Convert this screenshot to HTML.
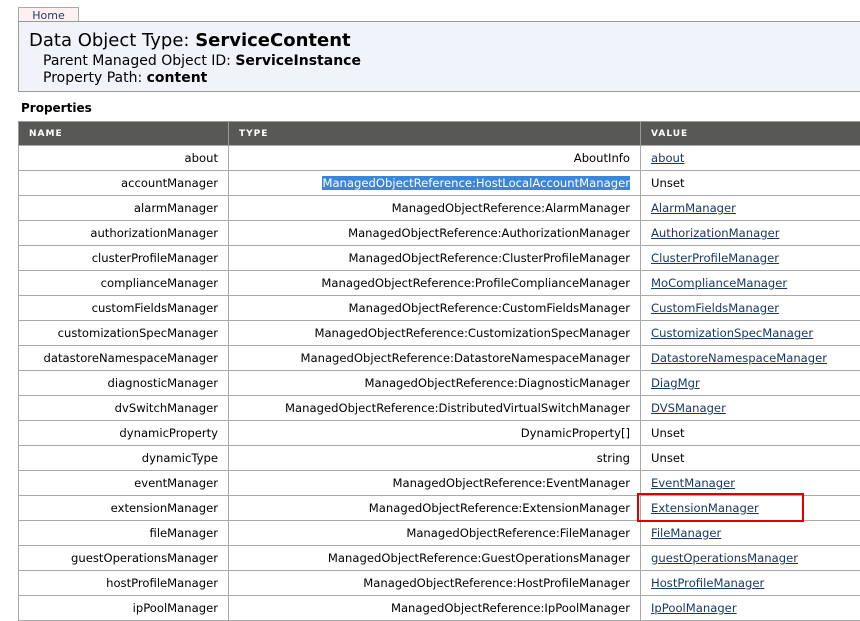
<!DOCTYPE html>
<html><head><meta charset="utf-8"><style>
body{margin:0;width:860px;height:608px;overflow:hidden;background:#fff;font-family:"DejaVu Sans",Verdana,sans-serif;color:#000;position:relative}
.tab{position:absolute;left:18px;top:7px;width:59px;height:14px;border:1px solid #aaa;border-bottom:none;background:#fdf0f2;font-size:11px;color:#2a3a5a;text-align:center;line-height:15px}
.hdr{position:absolute;left:18px;top:21px;width:850px;height:69px;border:1px solid #999;background:#f0f4fa}
.t1{position:absolute;left:10px;top:8px;font-size:18px;white-space:nowrap}
.t2{position:absolute;left:24px;top:31px;font-size:14px;white-space:nowrap;line-height:17px}
.props{position:absolute;left:21px;top:101px;font-size:12px;font-weight:bold}
table{position:absolute;left:18px;top:121px;border-collapse:collapse;table-layout:fixed;width:860px;font-size:11.6px}
th{background:#585956;color:#fff;font-size:9px;letter-spacing:1px;text-align:left;height:23px;padding:0 0 0 10px;border-left:1px solid #999;border-top:1px solid #999}
td{height:24px;padding:0 10px;border:1px solid #aaa;white-space:nowrap;overflow:hidden}
td.r{text-align:right}
a{color:#17375e;text-decoration:underline}
.sel{background:#3a86d9;color:#fff}
.red{position:absolute;left:637px;top:493px;width:163px;height:25px;border:2px solid #d00}
</style></head><body>
<div class="tab">Home</div>
<div class="hdr"><div class="t1">Data Object Type: <b>ServiceContent</b></div>
<div class="t2">Parent Managed Object ID: <b>ServiceInstance</b><br>Property Path: <b>content</b></div></div>
<div class="props">Properties</div>
<table>
<colgroup><col style="width:210px"><col style="width:412px"><col style="width:238px"></colgroup>
<tr><th>NAME</th><th>TYPE</th><th>VALUE</th></tr>
<tr><td class="r">about</td><td class="r">AboutInfo</td><td><a>about</a></td></tr>
<tr><td class="r">accountManager</td><td class="r"><span class="sel">ManagedObjectReference:HostLocalAccountManager</span></td><td>Unset</td></tr>
<tr><td class="r">alarmManager</td><td class="r">ManagedObjectReference:AlarmManager</td><td><a>AlarmManager</a></td></tr>
<tr><td class="r">authorizationManager</td><td class="r">ManagedObjectReference:AuthorizationManager</td><td><a>AuthorizationManager</a></td></tr>
<tr><td class="r">clusterProfileManager</td><td class="r">ManagedObjectReference:ClusterProfileManager</td><td><a>ClusterProfileManager</a></td></tr>
<tr><td class="r">complianceManager</td><td class="r">ManagedObjectReference:ProfileComplianceManager</td><td><a>MoComplianceManager</a></td></tr>
<tr><td class="r">customFieldsManager</td><td class="r">ManagedObjectReference:CustomFieldsManager</td><td><a>CustomFieldsManager</a></td></tr>
<tr><td class="r">customizationSpecManager</td><td class="r">ManagedObjectReference:CustomizationSpecManager</td><td><a>CustomizationSpecManager</a></td></tr>
<tr><td class="r">datastoreNamespaceManager</td><td class="r">ManagedObjectReference:DatastoreNamespaceManager</td><td><a>DatastoreNamespaceManager</a></td></tr>
<tr><td class="r">diagnosticManager</td><td class="r">ManagedObjectReference:DiagnosticManager</td><td><a>DiagMgr</a></td></tr>
<tr><td class="r">dvSwitchManager</td><td class="r">ManagedObjectReference:DistributedVirtualSwitchManager</td><td><a>DVSManager</a></td></tr>
<tr><td class="r">dynamicProperty</td><td class="r">DynamicProperty[]</td><td>Unset</td></tr>
<tr><td class="r">dynamicType</td><td class="r">string</td><td>Unset</td></tr>
<tr><td class="r">eventManager</td><td class="r">ManagedObjectReference:EventManager</td><td><a>EventManager</a></td></tr>
<tr><td class="r">extensionManager</td><td class="r">ManagedObjectReference:ExtensionManager</td><td><a>ExtensionManager</a></td></tr>
<tr><td class="r">fileManager</td><td class="r">ManagedObjectReference:FileManager</td><td><a>FileManager</a></td></tr>
<tr><td class="r">guestOperationsManager</td><td class="r">ManagedObjectReference:GuestOperationsManager</td><td><a>guestOperationsManager</a></td></tr>
<tr><td class="r">hostProfileManager</td><td class="r">ManagedObjectReference:HostProfileManager</td><td><a>HostProfileManager</a></td></tr>
<tr><td class="r">ipPoolManager</td><td class="r">ManagedObjectReference:IpPoolManager</td><td><a>IpPoolManager</a></td></tr>
</table>
<div class="red"></div>
</body></html>
